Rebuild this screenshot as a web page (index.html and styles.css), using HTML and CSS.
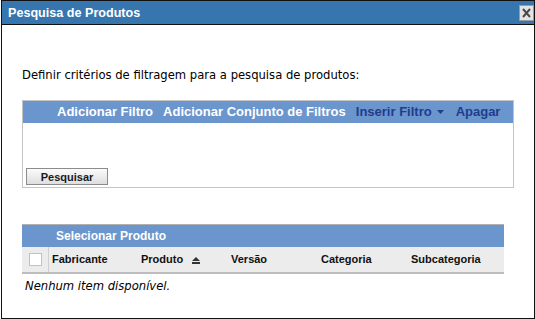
FILE: index.html
```html
<!DOCTYPE html>
<html lang="pt">
<head>
    <meta charset="UTF-8">
    <meta name="viewport" content="width=device-width, initial-scale=1.0">
    <title>Pesquisa de Produtos</title>
    <link rel="stylesheet" href="styles.css">
</head>
<body>
    <div class="dialog">
        <div class="titlebar">
            <span class="title">Pesquisa de Produtos</span>
            <span class="close">
                <svg width="13" height="14" viewBox="0 0 13 14">
                    <path d="M3 3 L10 11 M10 3 L3 11" stroke="#4a4a4a" stroke-width="2" fill="none"/>
                </svg>
            </span>
        </div>

        <div class="content">
            <p class="intro">Definir critérios de filtragem para a pesquisa de produtos:</p>

            <!-- Filtros -->
            <div class="filter-box">
                <div class="filter-bar">
                    <span class="link">Adicionar Filtro</span>
                    <span class="link">Adicionar Conjunto de Filtros</span>
                    <span class="link dark">Inserir Filtro</span>
                    <svg class="caret" width="7" height="4" viewBox="0 0 7 4">
                        <path d="M0 0 H7 L3.5 4 Z" fill="#1f3d8c"/>
                    </svg>
                    <span class="link dark apagar">Apagar</span>
                </div>
                <div class="filter-body">
                    <button class="btn">Pesquisar</button>
                </div>
            </div>

            <!-- Resultados -->
            <div class="results">
                <div class="results-title">Selecionar Produto</div>
                <div class="results-head">
                    <div class="cell check"><span class="checkbox"></span></div>
                    <div class="cell">Fabricante</div>
                    <div class="cell">Produto
                        <svg class="sort" width="8" height="7" viewBox="0 0 8 7">
                            <path d="M0 4 L4 0 L8 4 Z" fill="#333"/>
                            <rect x="0" y="5" width="8" height="2" fill="#333"/>
                        </svg>
                    </div>
                    <div class="cell">Versão</div>
                    <div class="cell">Categoria</div>
                    <div class="cell">Subcategoria</div>
                </div>
                <p class="empty">Nenhum item disponível.</p>
            </div>
        </div>
    </div>
</body>
</html>
```

FILE: styles.css
```css
body {
    margin: 0;
    background: #ffffff;
    font-family: "DejaVu Sans", Verdana, sans-serif;
    color: #000;
}
.dialog {
    margin-left: 1px;
    width: 534px;
    height: 319px;
    box-sizing: border-box;
    border: 1px solid #111;
    background: #fff;
}
.titlebar {
    height: 24px;
    box-sizing: border-box;
    padding: 2px 0 0 6px;
    background: #3675ad;
    border-bottom: 1px solid #111;
    display: flex;
    justify-content: space-between;
    align-items: flex-start;
}
.title {
    font-family: "Liberation Sans", Arial, sans-serif;
    font-weight: bold;
    font-size: 12.6px;
    line-height: 21px;
    color: #fff;
}
.close {
    margin-top: 2px;
    width: 15px;
    height: 16px;
    box-sizing: border-box;
    border: 1px solid #9c9c9c;
    background: #e4e4e4;
    display: flex;
}
.content {
    padding: 43px 0 0 20px;
}
.intro {
    margin: 0;
    font-size: 11.6px;
    line-height: 14px;
}

.filter-box {
    margin-top: 18px;
    width: 492px;
    height: 88px;
    box-sizing: border-box;
    border: 1px solid #c4c4c4;
    display: flex;
    flex-direction: column;
}
.filter-bar {
    height: 22px;
    background: #6b95cd;
    display: flex;
    align-items: center;
    padding-left: 34px;
    font-family: "Liberation Sans", Arial, sans-serif;
    font-weight: bold;
    font-size: 13px;
    line-height: 22px;
}
.link {
    color: #fff;
    margin-right: 10px;
}
.link.dark {
    color: #1f3d8c;
    margin-right: 5px;
}
.caret {
    margin-right: 12px;
}
.filter-body {
    flex: 1;
    display: flex;
    align-items: flex-end;
    padding: 0 0 2px 3px;
}
.btn {
    width: 82px;
    height: 17px;
    padding: 0;
    border: 1px solid #8c8c8c;
    background: linear-gradient(#fbfbfb, #dedede);
    font-family: "Liberation Sans", Arial, sans-serif;
    font-weight: bold;
    font-size: 11px;
    color: #1a1a1a;
}

.results {
    margin-top: 36px;
    width: 482px;
}
.results-title {
    height: 22px;
    border-top: 1px solid #b0b0b0;
    background: #6b95cd;
    color: #fff;
    padding-left: 34px;
    font-family: "Liberation Sans", Arial, sans-serif;
    font-weight: bold;
    font-size: 12px;
    line-height: 22px;
}
.results-head {
    display: grid;
    grid-template-columns: 27px 89px 90px 90px 90px 1fr;
    height: 25px;
    background: #ececec;
    border-bottom: 2px solid #bdbdbd;
    font-family: "Liberation Sans", Arial, sans-serif;
    font-weight: bold;
    font-size: 11px;
    line-height: 25px;
    color: #111;
}
.cell {
    padding-left: 3px;
    white-space: nowrap;
}
.cell.check {
    box-sizing: border-box;
    padding-left: 7px;
    border-right: 1px solid #d0d0d0;
    display: flex;
    align-items: center;
}
.checkbox {
    width: 13px;
    height: 13px;
    box-sizing: border-box;
    border: 1px solid #c6c3b4;
    background: #fff;
}
.sort {
    margin-left: 6px;
    vertical-align: -1px;
}
.empty {
    margin: 5px 0 0 3px;
    font-style: italic;
    font-size: 11.6px;
    line-height: 14px;
}
```
